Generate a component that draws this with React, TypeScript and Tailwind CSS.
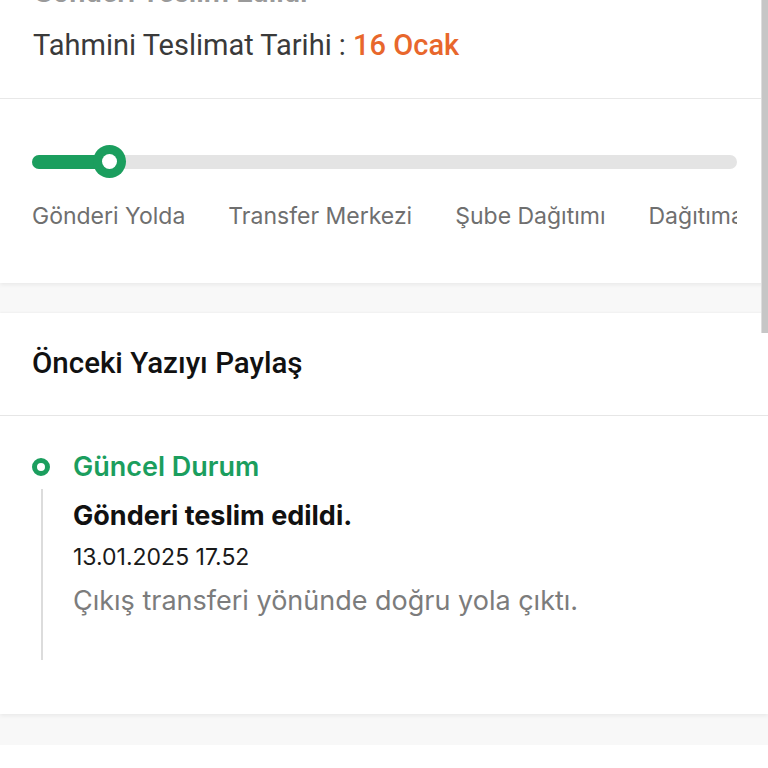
import React from 'react';

const steps = ['Gönderi Yolda', 'Transfer Merkezi', 'Şube Dağıtımı', 'Dağıtıma Çıktı'];

const ProgressCard = () => {
    return (
        <div className="bg-white shadow-[0_2px_4px_rgba(0,0,0,0.06)] relative z-10">
            {/* Estimated date */}
            <div className="px-[33px] pb-[35px] border-b border-[#e8e8e8]">
                <p className="-mt-[26px] text-[29px] leading-[36px] font-semibold text-[#9a9a9a] font-['Roboto',sans-serif]">
                    Gönderi Teslim Edildi
                </p>
                <p className="mt-[17px] text-[29px] leading-[36px] text-[#3a3a3a] font-['Roboto',sans-serif]">
                    Tahmini Teslimat Tarihi : <span className="text-[#e8672c] font-medium">16 Ocak</span>
                </p>
            </div>

            {/* Progress bar */}
            <div className="pl-[32px] pr-[31px] pt-[46px] pb-[52px]">
                <div className="relative h-[34px] flex items-center">
                    <div className="w-full h-[14px] rounded-full bg-[#e4e4e4]" />
                    <div className="absolute left-0 top-[10px] h-[14px] w-[80px] rounded-full bg-[#1b9e5e]" />
                    <div className="absolute left-[61px] top-0 w-[33px] h-[33px] rounded-full bg-[#1b9e5e] flex items-center justify-center">
                        <div className="w-[15px] h-[15px] rounded-full bg-white" />
                    </div>
                </div>
                <div className="mt-[22px] flex gap-[43px] overflow-hidden whitespace-nowrap">
                    {steps.map((s) => (
                        <span key={s} className="text-[23px] leading-[30px] text-[#6f6f6f] font-['Inter',sans-serif]">
                            {s}
                        </span>
                    ))}
                </div>
            </div>
        </div>
    );
};

const HistoryCard = () => {
    return (
        <div className="bg-white shadow-[0_2px_4px_rgba(0,0,0,0.06),0_-1px_2px_rgba(0,0,0,0.03)] relative z-10">
            <div className="px-[32px] pt-[32px] pb-[34px] border-b border-[#e6e6e6]">
                <h2 className="text-[29.5px] leading-[36px] font-medium text-[#111111] font-['Roboto',sans-serif]">
                    Önceki Yazıyı Paylaş
                </h2>
            </div>

            <div className="pl-[32px] pr-[32px] pt-[34px] pb-[54px] font-['Inter',sans-serif]">
                <div className="flex items-center gap-[23px]">
                    <div className="w-[18px] h-[18px] rounded-full border-[5px] border-[#1b9e5e]" />
                    <span className="text-[27px] leading-[34px] font-semibold text-[#1b9e5e]">Güncel Durum</span>
                </div>
                <div className="flex">
                    <div className="w-[20px] flex justify-center pt-[5px]">
                        <div className="w-[2px] h-full bg-[#dcdcdc]" />
                    </div>
                    <div className="ml-[21px] pt-[15px] pb-[42px]">
                        <p className="text-[27px] leading-[34px] font-bold text-[#111111]">Gönderi teslim edildi.</p>
                        <p className="mt-[9px] text-[23px] leading-[30px] text-[#1a1a1a]">13.01.2025 17.52</p>
                        <p className="mt-[12px] text-[27px] leading-[34px] text-[#7c7c7c]">
                            Çıkış transferi yönünde doğru yola çıktı.
                        </p>
                    </div>
                </div>
            </div>
        </div>
    );
};

export default function App() {
    return (
        <div className="relative min-h-screen bg-white overflow-hidden">
            <ProgressCard />
            <div className="h-[30px] bg-[#f8f8f8]" />
            <HistoryCard />
            <div className="h-[31px] bg-[#f8f8f8]" />

            {/* Scrollbar */}
            <div className="absolute right-0 top-0 w-[7px] h-[333px] bg-[#c6c6c6] border-l border-[#dddddd] z-20" />
        </div>
    );
}
